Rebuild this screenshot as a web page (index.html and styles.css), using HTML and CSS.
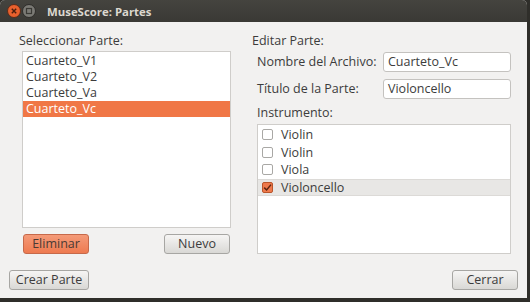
FILE: index.html
```html
<!DOCTYPE html>
<html>
<head>
<meta charset="utf-8">
<link rel="stylesheet" href="styles.css">
</head>
<body>
<div class="window">
  <div class="titlebar">
    <span class="tb-btn tb-close"><svg width="14" height="14" viewBox="0 0 14 14"><circle cx="7" cy="7" r="6.5" fill="#e8602d" stroke="#5a2c1a" stroke-width="1"/><path d="M4.8 4.8 L9.2 9.2 M9.2 4.8 L4.8 9.2" stroke="#4a1e0e" stroke-width="1.4"/></svg></span>
    <span class="tb-btn tb-min"><svg width="14" height="14" viewBox="0 0 14 14"><circle cx="7" cy="7" r="6.5" fill="#7b7a75" stroke="#2e2d2a" stroke-width="1"/><rect x="4.5" y="4.5" width="5" height="5" fill="none" stroke="#3a3935" stroke-width="1.2"/></svg></span>
    <span class="title">MuseScore: Partes</span>
  </div>
  <div class="content">
    <div class="main">
      <div class="left">
        <div class="label">Seleccionar Parte:</div>
        <ul class="list">
          <li>Cuarteto_V1</li>
          <li>Cuarteto_V2</li>
          <li>Cuarteto_Va</li>
          <li class="sel">Cuarteto_Vc</li>
        </ul>
        <div class="btnrow">
          <button class="btn btn-orange">Eliminar</button>
          <button class="btn">Nuevo</button>
        </div>
      </div>
      <div class="right">
        <div class="label">Editar Parte:</div>
        <div class="group">
          <div class="form">
            <span class="flabel">Nombre del Archivo:</span>
            <div class="input">Cuarteto_Vc</div>
            <span class="flabel">Título de la Parte:</span>
            <div class="input">Violoncello</div>
          </div>
          <div class="label inst">Instrumento:</div>
          <ul class="checklist">
            <li><span class="cb"></span>Violin</li>
            <li><span class="cb"></span>Violin</li>
            <li><span class="cb"></span>Viola</li>
            <li class="cur"><span class="cb on"><svg width="11" height="11" viewBox="0 0 11 11"><path d="M2.2 5.6 L4.6 8 L9 2.6" fill="none" stroke="#5b2412" stroke-width="1.5"/></svg></span>Violoncello</li>
          </ul>
        </div>
      </div>
    </div>
    <div class="bottom">
      <button class="btn btn-crear">Crear Parte</button>
      <button class="btn">Cerrar</button>
    </div>
  </div>
</div>
</body>
</html>
```

FILE: styles.css
```css
* { box-sizing: border-box; }
html, body { margin: 0; padding: 0; }
body {
  width: 530px;
  height: 302px;
  background: #2f2e2a;
  overflow: hidden;
  font-family: "Open Sans", "DejaVu Sans", sans-serif;
  font-size: 12.5px;
  color: #3c3c3c;
}
.window {
  width: 527px;
  height: 298px;
  background: #f2f1f0;
  border-radius: 5px 5px 0 0;
  overflow: hidden;
  display: flex;
  flex-direction: column;
}
.titlebar {
  height: 22px;
  background: linear-gradient(#45443f, #3a3935);
  display: flex;
  align-items: center;
  padding-left: 7px;
  flex: none;
}
.tb-btn { width: 14px; height: 14px; display: block; margin-right: 1px; }
.tb-btn svg { display: block; }
.title {
  margin-left: 10px;
  color: #dcd8cf;
  font-weight: bold;
  font-size: 11.4px;
  font-family: "Open Sans", "DejaVu Sans", sans-serif;
}
.content {
  flex: 1;
  display: flex;
  flex-direction: column;
  padding: 11px 9px 8px 9px;
}
.main {
  display: flex;
}
.left {
  width: 222px;
  padding-left: 10px;
}
.label { line-height: 16px; height: 16px; }
.list {
  list-style: none;
  margin: 2px 0 0 3px;
  padding: 1px 0 0 0;
  width: 209px;
  height: 177px;
  background: #fff;
  border: 1px solid #cfcdca;
}
.list li {
  height: 16px;
  line-height: 16px;
  padding-left: 3px;
}
.list li.sel {
  background: #f07746;
  color: #fff;
}
.btnrow {
  display: flex;
  justify-content: space-between;
  margin: 6px 0 0 4px;
  width: 207px;
}
.btn {
  font-family: inherit;
  font-size: 12.5px;
  color: #3c3c3c;
  width: 66px;
  height: 20px;
  padding: 0;
  border: 1px solid #a7a6a3;
  border-radius: 3px;
  background: linear-gradient(#f6f5f4, #d9d8d5);
  line-height: 18px;
}
.btn-orange {
  background: linear-gradient(#f49a78, #ee7a50);
  border-color: #c6694a;
  color: #4a3a34;
}
.right {
  margin-left: 21px;
  width: 259px;
}
.group { padding-left: 5px; margin-top: 3px; }
.form {
  display: grid;
  grid-template-columns: 126px 128px;
  row-gap: 7px;
  align-items: center;
}
.flabel { line-height: 16px; }
.input {
  height: 20px;
  background: #fff;
  border: 1px solid #c4c2bf;
  border-radius: 3px;
  padding-left: 4px;
  line-height: 18px;
}
.inst { margin-top: 6px; }
.checklist {
  list-style: none;
  margin: 3px 0 0 0;
  padding: 1px 0 0 0;
  width: 254px;
  height: 130px;
  background: #fff;
  border: 1px solid #cfcdca;
}
.checklist li {
  height: 17.5px;
  display: flex;
  align-items: center;
  padding-left: 4px;
}
.checklist li.cur { background: #e8e7e5; border-top: 1px solid #dcdad7; border-bottom: 1px solid #dcdad7; }
.cb {
  width: 11px;
  height: 11px;
  border: 1px solid #a9a8a5;
  border-radius: 2px;
  background: #fff;
  margin-right: 8px;
  flex: none;
  position: relative;
}
.cb.on { background: #ef7a4c; border-color: #b9552c; }
.cb.on svg { position: absolute; left: -1px; top: -1px; }
.bottom {
  margin-top: auto;
  display: flex;
  justify-content: space-between;
}
.btn-crear { width: 80px; }
```
